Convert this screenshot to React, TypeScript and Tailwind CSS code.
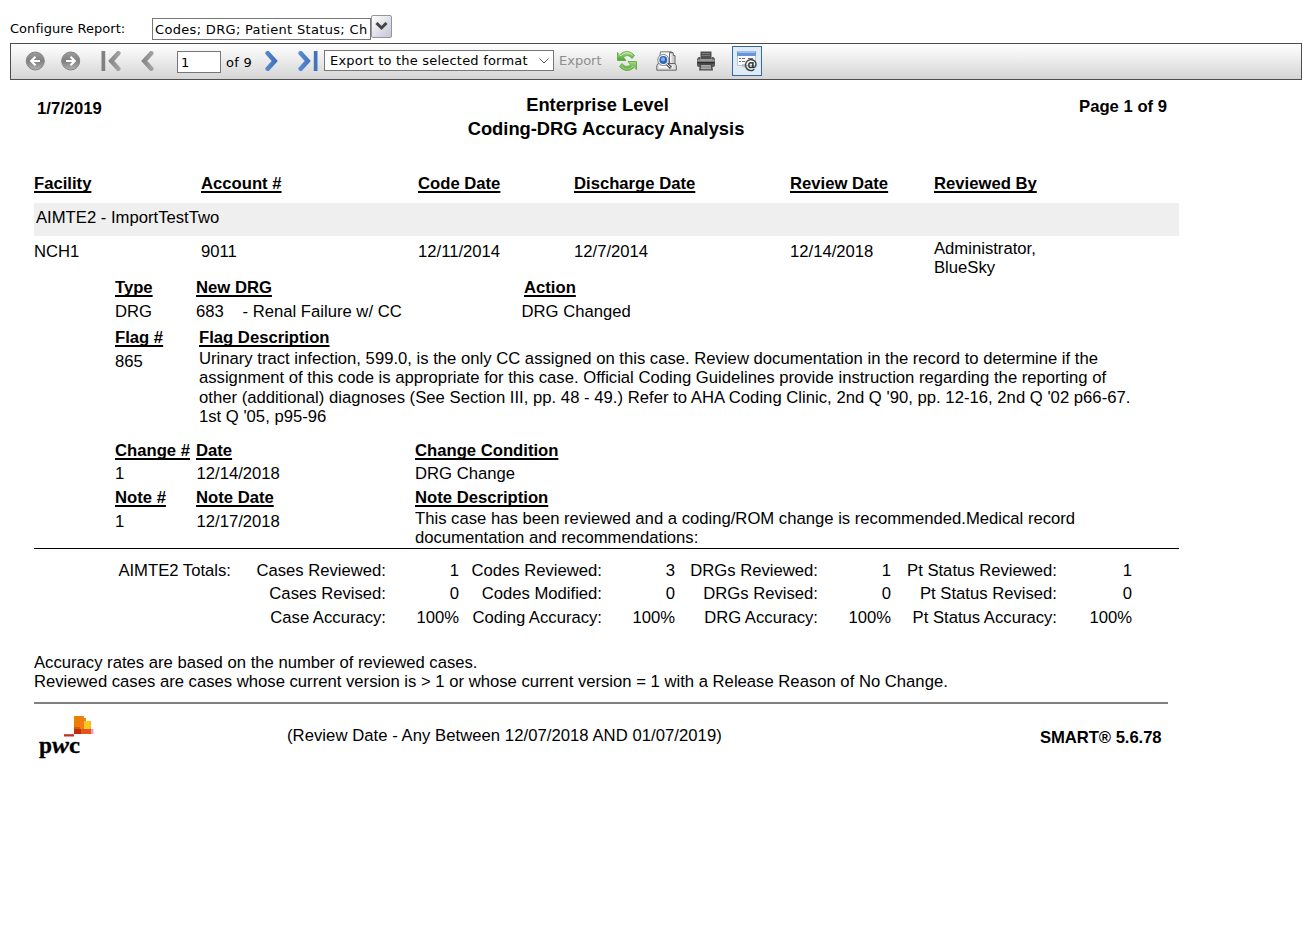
import type { ReactNode } from "react";

function Heading({ children }: { children: ReactNode }) {
  return (
    <div className="font-bold whitespace-nowrap">
      <span className="underline decoration-2 underline-offset-2 [text-decoration-skip-ink:none]">{children}</span>
    </div>
  );
}

function Cell({ children }: { children?: ReactNode }) {
  return <div className="whitespace-pre">{children}</div>;
}

function CircleArrow({ id, flip }: { id: string; flip?: boolean }) {
  return (
    <svg width="20" height="20" viewBox="0 0 20 20" className={flip ? "-scale-x-100" : ""}>
      <defs>
        <linearGradient id={id} x1="0" y1="0" x2="0" y2="1">
          <stop offset="0" stopColor="#9c9c9c" />
          <stop offset="0.5" stopColor="#808080" />
          <stop offset="1" stopColor="#b0b0b0" />
        </linearGradient>
      </defs>
      <circle cx="10.3" cy="10" r="9" fill={`url(#${id})`} stroke="#858585" />
      <path d="M15 10H7M10.500 5.800 6.200 10l4.300 4.200" fill="none" stroke="#fff" strokeWidth="2.200" />
    </svg>
  );
}

function NavArrow({ id, color, light, bar, flip }: { id: string; color: string; light: string; bar?: boolean; flip?: boolean }) {
  const w = bar ? 20 : 13;
  return (
    <svg width={w} height="20" viewBox={bar ? "0 0 20 20" : "7 0 13 20"} className={flip ? "-scale-x-100" : ""}>
      <defs>
        <linearGradient id={id} gradientUnits="userSpaceOnUse" x1="7" y1="0" x2="20" y2="0">
          <stop offset="0" stopColor={color} />
          <stop offset="1" stopColor={light} />
        </linearGradient>
      </defs>
      {bar && <rect x="0.500" y="0" width="3.700" height="20" fill={color} />}
      <path d="M17.300 2.300 10.300 10l7 7.700" fill="none" stroke={`url(#${id})`} strokeWidth="4.600" strokeLinecap="round" />
    </svg>
  );
}

function RefreshIcon() {
  return (
    <svg width="20" height="20" viewBox="0 0 20 20">
      <defs>
        <linearGradient id="green" x1="0" y1="0" x2="0" y2="1">
          <stop offset="0" stopColor="#a9dc85" />
          <stop offset="1" stopColor="#4ea02f" />
        </linearGradient>
      </defs>
      <path d="M.5 1.500 3 3.700C7-.8 13.500-.4 17.500 4.500L15 7.500C12.500 4 9 3.600 6.600 6.600L9 9.500H.5z" fill="url(#green)" stroke="#58a43a" strokeWidth=".8" />
      <path d="M19.500 18.500 17 16.300C13 20.800 6.500 20.400 2.500 15.500L5 12.500C7.500 16 11 16.400 13.400 13.400L11 10.500h8.500z" fill="url(#green)" stroke="#58a43a" strokeWidth=".8" />
      <path d="M1.500 3 4 4.800C7 1 12 1 15.500 4" fill="none" stroke="#d5f0c2" strokeWidth="1" />
      <path d="M18.500 17 16 15.200C13 19 8 19 4.500 16" fill="none" stroke="#b9e59c" strokeWidth=".8" />
    </svg>
  );
}

function PreviewIcon() {
  return (
    <svg width="21" height="20" viewBox="0 0 21 20">
      <path d="M4.500.800h11l1.500 12H2.500z" fill="#f8f8f8" stroke="#777" />
      <path d="M13.500 1.500H17l.5 3h1.500v9h-5.500z" fill="#cfcfcf" stroke="#666" />
      <path d="M14.800 3v9" stroke="#f5f5f5" strokeWidth="1.400" />
      <path d="M2 12.500h17l1.300 2v4.700H.8v-4.700z" fill="#dedede" stroke="#666" />
      <path d="M3 15.800h14" stroke="#fff" strokeWidth="1.600" />
      <path d="m11 13 4 3.800" stroke="#4c4c4c" strokeWidth="3" />
      <path d="m11 13 3.500 3.300" stroke="#eee" strokeWidth="1" />
      <circle cx="7.300" cy="9" r="5.600" fill="#f2f5fa" stroke="#8a8a8a" />
      <circle cx="7.300" cy="9" r="4" fill="#3168b5" />
      <circle cx="7" cy="8.300" r="2" fill="#83b2ea" />
    </svg>
  );
}

function PrinterIcon() {
  return (
    <svg width="20" height="20" viewBox="0 0 20 20">
      <path d="M4.500.5h11v8h-11z" fill="#505050" />
      <path d="M6 2.500h8M6 4.500h8" stroke="#858585" strokeWidth=".8" />
      <path d="M2.500 6h2v3h11V6h2l1.500 2v7l-1.500 1h-15L1 15V8z" fill="#5b5b5b" />
      <path d="M1.500 8.500h17v2h-17z" fill="#9a9a9a" />
      <path d="M1.500 11h17v1.500h-17z" fill="#2e2e2e" />
      <path d="M4 13h12l1 6.500H3z" fill="#4b4b4b" />
      <path d="M5.200 14h9.600l.5 4.200H4.700z" fill="#a9a9a9" />
      <path d="M5 16h10" stroke="#777" strokeWidth=".7" />
    </svg>
  );
}

function ParametersIcon() {
  return (
    <svg width="22" height="22" viewBox="0 0 22 22">
      <path d="M1.500 2.500h18v13h-18z" fill="#fafbfd" stroke="#b8c3d2" />
      <path d="M1 1.500h19V6H1z" fill="#6795db" />
      <path d="M2 2.500h17" stroke="#9bc0ef" />
      <path d="M3 8.500h2M6 8.500h3M3 11.500h2M6 11.500h3M12 8.500h5" stroke="#6d6d6d" />
      <path d="M6 14h4v3H6z" fill="#b8c5da" />
      <text x="8" y="19" fontFamily="DejaVu Sans" fontSize="13.500" fontWeight="bold" fill="#333">@</text>
    </svg>
  );
}

function PwcLogo() {
  return (
    <svg width="60" height="46" viewBox="0 0 60 46">
      <path d="M36 1h10v2h2v3h5v9h2v4H36z" fill="#ee8420" />
      <path d="M46 6h6.700v8H46z" fill="#f8c91c" />
      <path d="M36 1h8v11h-8z" fill="#eb7f00" />
      <path d="M42 3h4v11h-4z" fill="#f07c16" />
      <path d="M36 14h7v5h-7z" fill="#c52a06" />
      <path d="M43 14h10v5H43z" fill="#e2551c" />
      <path d="M36 12h6v2h-6z" fill="#d75c05" />
      <path d="M53 14h2.500v5H53z" fill="#f29ac2" />
      <path d="M26 19.200h10v2.300H26z" fill="#c4301b" />
      <g fontFamily="Liberation Serif" fontWeight="bold" fontSize="24" fill="#000" stroke="#000" strokeWidth=".3">
        <text x="1" y="37.500" textLength="13" lengthAdjust="spacingAndGlyphs">p</text>
        <text x="14" y="37.500" fontStyle="italic" textLength="17" lengthAdjust="spacingAndGlyphs">w</text>
        <text x="31" y="37.500" textLength="11" lengthAdjust="spacingAndGlyphs">c</text>
      </g>
    </svg>
  );
}

function Toolbar() {
  return (
    <div className="mx-[10px] flex h-[37px] items-start border border-[#4d4d4f] bg-linear-to-b from-white to-[#d5d5d5] text-[13px]">
      <div className="mt-[7px] ml-[14px] flex gap-4">
        <CircleArrow id="back" />
        <CircleArrow id="forward" flip />
      </div>
      <div className="mt-[7px] ml-[20px] flex gap-5">
        <NavArrow id="first" color="#808080" light="#a8a8a8" bar />
        <NavArrow id="prev" color="#808080" light="#a8a8a8" />
      </div>
      <div className="mt-[7px] ml-[23px] h-[22px] w-[44px] border border-[#777] bg-white pl-[3px] leading-[22px]">1</div>
      <div className="mt-[9px] ml-[5px] w-[39px] leading-5 tracking-[0.3px]">of 9</div>
      <div className="mt-[7px] flex gap-5">
        <NavArrow id="next" color="#3869b4" light="#5a8ed2" flip />
        <NavArrow id="last" color="#4273bd" light="#5a8ed2" bar flip />
      </div>
      <div className="mt-[6px] ml-[6px] flex h-[21px] w-[230px] shrink-0 items-center justify-between border border-[#777] bg-white pr-1 pl-[5px] whitespace-nowrap">
        <span className="tracking-[0.21px]">Export to the selected format</span>
        <svg width="10" height="6" viewBox="0 0 10 6">
          <path d="m.5.500 4.500 4.500L9.500.5" fill="none" stroke="#555" />
        </svg>
      </div>
      <div className="mt-[7px] ml-[5px] w-[58px] leading-5 text-[#8d8d8d]">Export</div>
      <div className="mt-[7px]"><RefreshIcon /></div>
      <div className="mt-[7px] ml-[19px]"><PreviewIcon /></div>
      <div className="mt-[7px] ml-[19px]"><PrinterIcon /></div>
      <div className="mt-[2px] ml-[16px] flex h-[30px] w-[30px] items-center justify-center border border-[#3569a5] bg-[#e0ebf5]">
        <ParametersIcon />
      </div>
    </div>
  );
}

const totals = [
  ["AIMTE2 Totals:", "Cases Reviewed:", "1", "Codes Reviewed:", "3", "DRGs Reviewed:", "1", "Pt Status Reviewed:", "1"],
  ["", "Cases Revised:", "0", "Codes Modified:", "0", "DRGs Revised:", "0", "Pt Status Revised:", "0"],
  ["", "Case Accuracy:", "100%", "Coding Accuracy:", "100%", "DRG Accuracy:", "100%", "Pt Status Accuracy:", "100%"],
];

function Report() {
  return (
    <div className="ml-[34px] w-[1145px] font-['Liberation_Sans',Arial,sans-serif] text-[16.67px] leading-[19px]">
      <div className="flex h-[94px] items-start pr-3">
        <div className="mt-[19px] ml-[3px] w-[269px] font-bold">1/7/2019</div>
        <div className="mt-[13px] w-[600px] text-center text-[18.33px] leading-6 font-bold">
          <div className="pr-[17px]">Enterprise Level</div>
          <div>Coding-DRG Accuracy Analysis</div>
        </div>
        <div className="mt-[17px] ml-auto text-right font-bold whitespace-nowrap">Page 1 of 9</div>
      </div>

      <div className="grid h-[29px] grid-cols-[167px_217px_156px_216px_144px_auto]">
        <Heading>Facility</Heading>
        <Heading>Account #</Heading>
        <Heading>Code Date</Heading>
        <Heading>Discharge Date</Heading>
        <Heading>Review Date</Heading>
        <Heading>Reviewed By</Heading>
      </div>
      <div className="h-[33px] bg-[#efefef] pt-[5px] pl-[2px]">AIMTE2 - ImportTestTwo</div>
      <div className="grid h-[42px] grid-cols-[167px_217px_156px_216px_144px_auto] pt-[6px]">
        <Cell>NCH1</Cell>
        <Cell>9011</Cell>
        <Cell>12/11/2014</Cell>
        <Cell>12/7/2014</Cell>
        <Cell>12/14/2018</Cell>
        <div className="-mt-[3px]">Administrator,<br />BlueSky</div>
      </div>

      <div className="ml-[81px]">
        <div className="grid h-6 grid-cols-[81px_328px_auto]">
          <Heading>Type</Heading>
          <Heading>New DRG</Heading>
          <Heading>Action</Heading>
        </div>
        <div className="grid h-[26px] grid-cols-[81px_46.500px_279px_auto]">
          <Cell>DRG</Cell>
          <Cell>683</Cell>
          <Cell>- Renal Failure w/ CC</Cell>
          <Cell>DRG Changed</Cell>
        </div>
        <div className="grid h-[21px] grid-cols-[84px_auto]">
          <Heading>Flag #</Heading>
          <Heading>Flag Description</Heading>
        </div>
        <div className="grid h-[92px] grid-cols-[84px_auto]">
          <div className="pt-[3px]">865</div>
          <div className="leading-[19.33px] whitespace-nowrap">
            Urinary tract infection, 599.0, is the only CC assigned on this case. Review documentation in the record to determine if the<br />
            assignment of this code is appropriate for this case. Official Coding Guidelines provide instruction regarding the reporting of<br />
            <span className="tracking-[0.015px]">other (additional) diagnoses (See Section III, pp. 48 - 49.) Refer to AHA Coding Clinic, 2nd Q '90, pp. 12-16, 2nd Q '02 p66-67.</span><br />
            1st Q '05, p95-96
          </div>
        </div>
        <div className="grid h-[23px] grid-cols-[81px_219px_auto]">
          <Heading>Change #</Heading>
          <Heading>Date</Heading>
          <Heading>Change Condition</Heading>
        </div>
        <div className="grid h-6 grid-cols-[81.500px_218.500px_auto]">
          <Cell>1</Cell>
          <Cell>12/14/2018</Cell>
          <Cell>DRG Change</Cell>
        </div>
        <div className="grid h-[21px] grid-cols-[81px_219px_auto]">
          <Heading>Note #</Heading>
          <Heading>Note Date</Heading>
          <Heading>Note Description</Heading>
        </div>
        <div className="grid h-[39px] grid-cols-[81.500px_218.500px_auto]">
          <div className="pt-[3px]">1</div>
          <div className="pt-[3px]">12/17/2018</div>
          <div className="whitespace-nowrap">
            This case has been reviewed and a coding/ROM change is recommended.Medical record<br />documentation and recommendations:
          </div>
        </div>
      </div>

      <div className="grid h-[105px] grid-cols-[197px_155px_73px_143px_73px_143px_73px_166px_75px] grid-rows-[23px_24px_23px] border-t border-black pt-3 text-right whitespace-nowrap">
        {totals.flatMap((row, r) => row.map((value, i) => <div key={`${r}-${i}`}>{value}</div>))}
      </div>

      <div className="h-[49px]">
        Accuracy rates are based on the number of reviewed cases.<br />
        Reviewed cases are cases whose current version is &gt; 1 or whose current version = 1 with a Release Reason of No Change.
      </div>
      <div className="h-[2px] w-[1134px] bg-[#808080]" />
      <div className="flex items-start">
        <div className="mt-[11px] ml-[4px] w-[249px]"><PwcLogo /></div>
        <div className="mt-[22px] w-[753px] tracking-[0.045px]">(Review Date - Any Between 12/07/2018 AND 01/07/2019)</div>
        <div className="mt-6 font-bold tracking-[-0.07px] whitespace-nowrap">SMART® 5.6.78</div>
      </div>
    </div>
  );
}

export default function App() {
  return (
    <div className="min-h-[937px] w-[1312px] overflow-hidden bg-white font-['DejaVu_Sans',Verdana,sans-serif] text-black">
      <div className="flex h-[43px] items-start pl-[10px] text-[13px]">
        <div className="mt-[19px] w-[142px] leading-5 tracking-[0.04px]">Configure Report:</div>
        <div className="mt-[18px] h-[22px] w-[219px] overflow-hidden border border-[#777] pl-[2px] leading-[22px] tracking-[0.32px] whitespace-nowrap">
          Codes; DRG; Patient Status; Ch
        </div>
        <div className="mt-[15px] flex h-[23px] w-[21px] items-center justify-center rounded-[2px] border border-[#9393a4] bg-linear-to-br from-white to-[#c5c5d7]">
          <svg width="13" height="9" viewBox="0 0 13 9">
            <path d="m1.500 1 5 5 5-5" fill="none" stroke="#444" strokeWidth="3" />
          </svg>
        </div>
      </div>
      <Toolbar />
      <Report />
    </div>
  );
}
